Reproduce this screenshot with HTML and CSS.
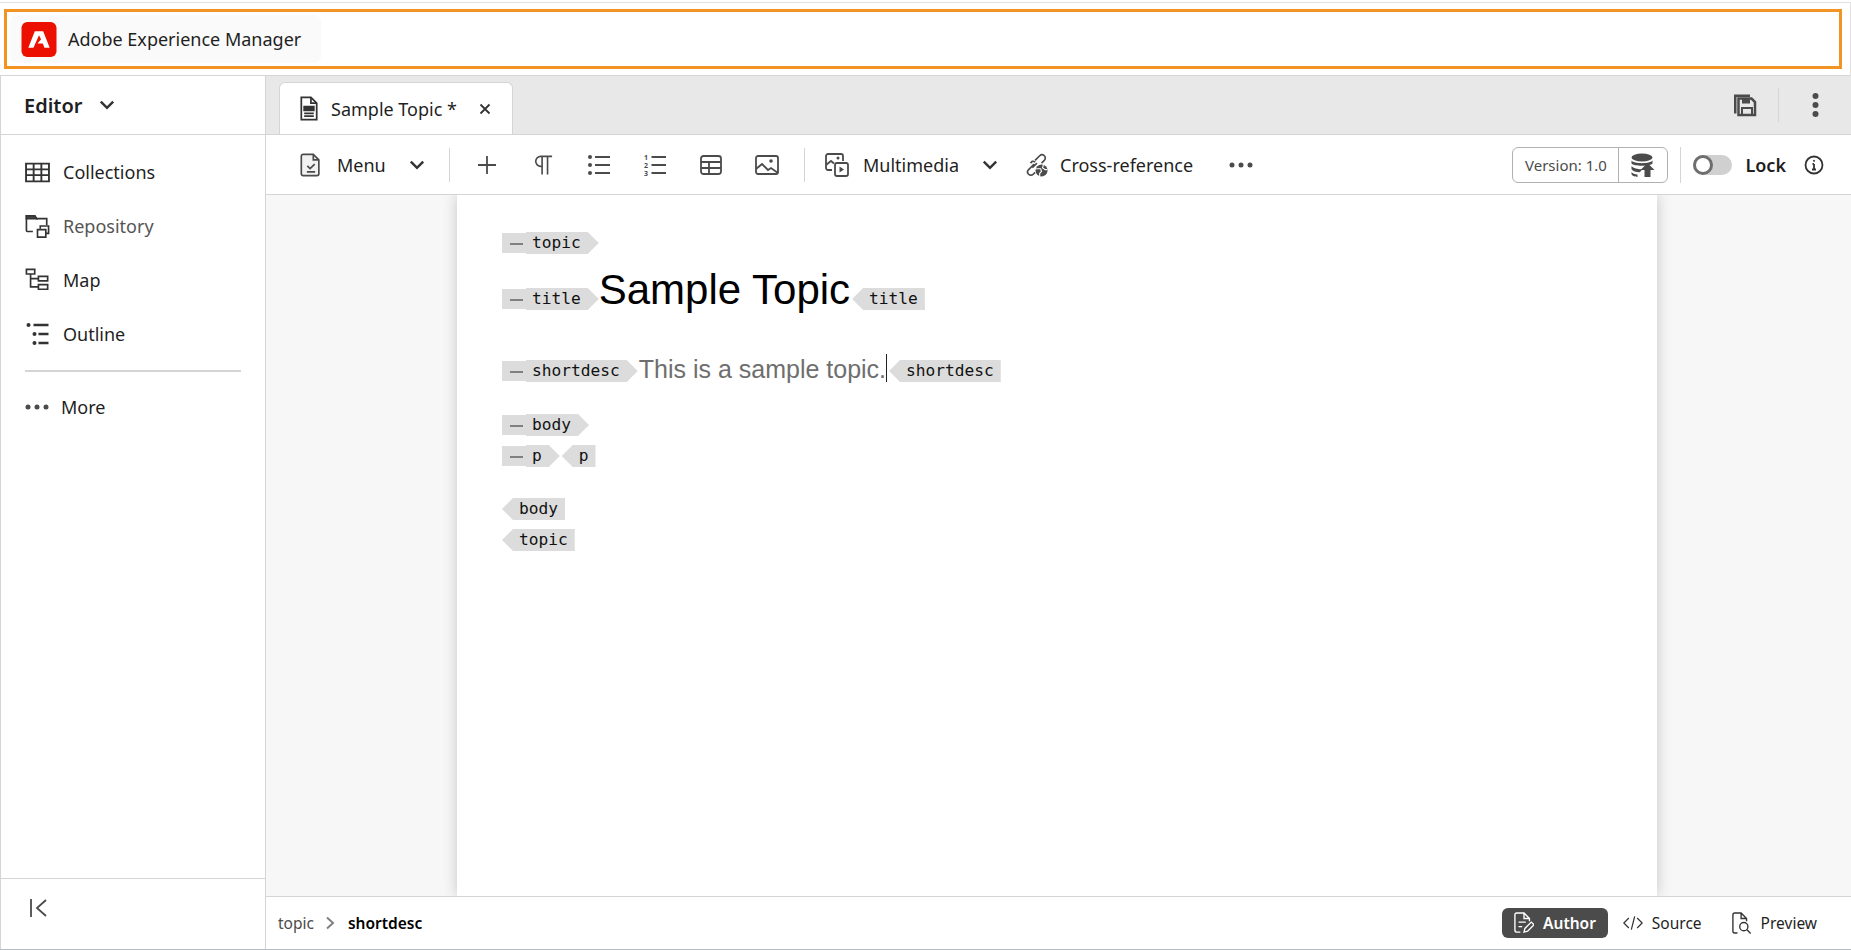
FILE: index.html
```html
<!DOCTYPE html>
<html lang="en">
<head>
    <meta charset="UTF-8">
    <title>Adobe Experience Manager</title>
    <link rel="stylesheet" href="styles.css">
</head>
<body>
<div class="app">
    <header class="topbar">
        <div class="topbar-frame">
            <div class="brand">
                <svg class="brand-logo" viewBox="0 0 36 36"><rect width="36" height="36" rx="6" fill="#eb1000"/><path d="M13.700 9.500h8.600L29 26.500h-5.400l-1.700-4.500h-5.400l3.600-4.300L18 13.500 12.300 26.500H7z" fill="#fff"/></svg>
                <span>Adobe Experience Manager</span>
            </div>
        </div>
    </header>
    <div class="workspace">
        <aside class="sidebar">
            <div class="sidebar-head">
                <span>Editor</span>
                <svg class="ico-chev" viewBox="0 0 16 16"><path d="M2.500 5l5.500 5.500L13.500 5"/></svg>
            </div>
            <nav class="side-nav">
                <a class="side-item">
                    <svg class="ico" viewBox="0 0 24 20"><path d="M1 2h22v17H1zM1 7.500h22M1 13h22M8.300 2v17M15.700 2v17"/></svg>
                    <span>Collections</span>
                </a>
                <a class="side-item muted">
                    <svg class="ico" viewBox="0 0 26 26"><path d="M8 19H2a1 1 0 0 1-1-1V2h9l2 3h11v7"/><path d="M1 2h9l2 3H1z" fill="#4b4b4b"/><path d="M16 16V13h9v8h-3"/><path d="M13 17h9v8h-9z"/></svg>
                    <span>Repository</span>
                </a>
                <a class="side-item">
                    <svg class="ico" viewBox="0 0 26 26"><path d="M1 1.500h9v5H1zM14 9h10v5H14zM14 18h10v5H14zM5.500 6.500V20.500H14M5.500 11.500H14"/></svg>
                    <span>Map</span>
                </a>
                <a class="side-item">
                    <svg class="ico" viewBox="0 0 24 24"><circle cx="3" cy="3" r="2" fill="#333" stroke="none"/><circle cx="9" cy="12" r="2" fill="#333" stroke="none"/><circle cx="9" cy="21" r="2" fill="#333" stroke="none"/><path class="thick" d="M8 3h15M13 12h10M13 21h10"/></svg>
                    <span>Outline</span>
                </a>
            </nav>
            <div class="side-more">
                <svg class="ico-dots" viewBox="0 0 24 6"><circle cx="3" cy="3" r="2.500"/><circle cx="12" cy="3" r="2.500"/><circle cx="21" cy="3" r="2.500"/></svg>
                <span>More</span>
            </div>
            <div class="side-foot">
                <svg class="ico-collapse" viewBox="0 0 20 20"><path d="M2 1v18M17 2L8 10l9 8"/></svg>
            </div>
        </aside>
        <main class="editor">
            <div class="tabstrip">
                <div class="tab">
                    <svg class="ico-doc" viewBox="0 0 20 26"><path d="M2 1.500h10l6 6v17H2z" fill="#fff"/><path d="M12 1.500v6h6" /><path d="M5 11h10v4H5z" fill="#333"/><path d="M5 18h10M5 21h10"/></svg>
                    <span>Sample Topic *</span>
                    <svg class="ico-close" viewBox="0 0 12 12"><path d="M1.500 1.500l9 9M10.500 1.500l-9 9"/></svg>
                </div>
                <div class="tab-actions">
                    <svg class="ico-save" viewBox="0 0 24 24"><path d="M1 1.500h16v2.500H3.500v16.500H1z" fill="#4b4b4b"/><path d="M5.500 5.500h13l3.500 3.500v13H5.500z" fill="none" stroke="#4b4b4b" stroke-width="2.500"/><path d="M9 5.500h8v5H9z" fill="#4b4b4b"/><path d="M9 15h10v7H9z" fill="none" stroke="#4b4b4b" stroke-width="2"/></svg>
                    <i class="vsep tall"></i>
                    <svg class="ico-kebab" viewBox="0 0 6 24"><circle cx="3" cy="3" r="3"/><circle cx="3" cy="12" r="3"/><circle cx="3" cy="21" r="3"/></svg>
                </div>
            </div>
            <div class="toolbar">
                <div class="tool-group first">
                    <svg class="ico" viewBox="0 0 22 26"><path d="M2.500 1.500h11l6 6v15a2 2 0 0 1-2 2h-15a2 2 0 0 1-2-2v-19a2 2 0 0 1 2-2z" fill="#f2f2f2"/><path d="M13.500 1.500v6h6M7 14l3 3 5-5M6.500 20.500h9"/></svg>
                    <span class="tool-label menu-label">Menu</span>
                    <svg class="ico-chev menu-chev" viewBox="0 0 16 16"><path d="M2.500 5l5.500 5.500L13.500 5"/></svg>
                </div>
                <i class="vsep"></i>
                <div class="tool-icons">
                    <button class="icon-btn"><svg class="ico" viewBox="0 0 20 20"><path d="M10 1v18M1 10h18"/></svg></button>
                    <button class="icon-btn"><svg class="ico" viewBox="0 0 20 22"><path d="M9 1.500v20M15 1.500v20M20 1.500H7.500a5.500 5.500 0 0 0 0 11H9"/></svg></button>
                    <button class="icon-btn"><svg class="ico ico-wide" viewBox="0 0 22 20"><circle cx="2" cy="2" r="2" class="dot"/><circle cx="2" cy="10" r="2" class="dot"/><circle cx="2" cy="18" r="2" class="dot"/><path d="M7 2h15M7 10h15M7 18h15"/></svg></button>
                    <button class="icon-btn"><svg class="ico ico-wide" viewBox="0 0 22 20"><path d="M7.500 2h14.500M7.500 10h14.500M7.500 18h14.500"/><text class="ol-num" x="0" y="5">1</text><text class="ol-num" x="0" y="13">2</text><text class="ol-num" x="0" y="21">3</text></svg></button>
                    <button class="icon-btn"><svg class="ico" viewBox="0 0 22 20"><rect x="1" y="1" width="20" height="18" rx="2.500"/><path d="M1 7h20M1 13h20M9 7v12"/></svg></button>
                    <button class="icon-btn"><svg class="ico ico-wide" viewBox="0 0 24 20"><rect x="1" y="1" width="22" height="18" rx="2"/><path d="M1 14l6-5 6 6 3-2 7 5"/><circle cx="16" cy="6" r="1.800" class="dot"/></svg></button>
                </div>
                <i class="vsep"></i>
                <div class="tool-group multimedia">
                    <svg class="ico" viewBox="0 0 24 24"><path d="M7 17H3a2 2 0 0 1-2-2V3a2 2 0 0 1 2-2h13a2 2 0 0 1 2 2v5"/><path d="M1 12l5-4 3 2.500"/><circle cx="13" cy="5" r="1.500" class="dot"/><rect x="10" y="10" width="13" height="13" rx="2"/><path d="M14.500 13.500l4.500 3-4.500 3z" class="dot"/></svg>
                    <span class="tool-label">Multimedia</span>
                    <svg class="ico-chev mm-chev" viewBox="0 0 16 16"><path d="M2.500 5l5.500 5.500L13.500 5"/></svg>
                </div>
                <div class="tool-group xref">
                    <svg class="ico ico-xref" viewBox="0 0 26 26"><path d="M11 12l-6 6a3.500 3.500 0 0 0 5 5l2-2M7 11l2-2a3 3 0 0 1 3 1M12 8l5-5a3.500 3.500 0 0 1 5 5l-3 3M9 16l5-5"/><circle cx="19" cy="19" r="6.500" class="dot"/><path class="globe" d="M13 17h5l1 3-2 2v3M21 13l-1 3 3 2 2 0"/></svg>
                    <span class="tool-label">Cross-reference</span>
                </div>
                <svg class="ico-dots tool-dots" viewBox="0 0 24 6"><circle cx="3" cy="3" r="2.500"/><circle cx="12" cy="3" r="2.500"/><circle cx="21" cy="3" r="2.500"/></svg>
                <div class="tool-right">
                    <div class="version">
                        <span class="version-label">Version: 1.0</span>
                        <span class="version-btn">
                            <svg viewBox="0 0 24 24"><ellipse cx="11" cy="4.500" rx="10.500" ry="4" fill="#4b4b4b"/><path d="M.5 7.500c2 3.500 19 3.500 21 0v3c-2 3-19 3-21 0zM.5 13c2 2.800 8 3.500 11 3.200l-2.700 3c-4 0-7-1-8.300-3zM.5 19c1 1.500 3.500 2.200 6 2.500V24c-3-.2-6-1.500-6-3z" fill="#4b4b4b"/><path d="M16.500 10l7 7h-4v7h-6v-7h-4z" fill="#4b4b4b"/></svg>
                        </span>
                    </div>
                    <i class="vsep tall2"></i>
                    <span class="toggle"></span>
                    <span class="lock">Lock</span>
                    <svg class="ico-info" viewBox="0 0 20 20"><circle cx="10" cy="10" r="8.500"/><path d="M10 9v5.500M8 14.500h4M8.500 9H10"/><circle cx="10" cy="5.800" r="1.100" class="dot"/></svg>
                </div>
            </div>
            <div class="canvas">
                <div class="page">
                    <div class="doc-line line-topic">
                        <span class="tag open"><i class="tag-dash"></i><b>topic</b></span>
                    </div>
                    <div class="doc-line line-title">
                        <span class="tag open"><i class="tag-dash"></i><b>title</b></span>
                        <span class="doc-title">Sample Topic</span>
                        <span class="tag close"><b>title</b></span>
                    </div>
                    <div class="doc-line line-desc">
                        <span class="tag open"><i class="tag-dash"></i><b>shortdesc</b></span>
                        <span class="doc-desc">This is a sample topic.</span><i class="caret"></i>
                        <span class="tag close"><b>shortdesc</b></span>
                    </div>
                    <div class="doc-line line-body">
                        <span class="tag open"><i class="tag-dash"></i><b>body</b></span>
                    </div>
                    <div class="doc-line line-p">
                        <span class="tag open"><i class="tag-dash"></i><b>p</b></span>
                        <span class="tag close"><b>p</b></span>
                    </div>
                    <div class="doc-line line-endbody">
                        <span class="tag close end"><b>body</b></span>
                    </div>
                    <div class="doc-line line-endtopic">
                        <span class="tag close end"><b>topic</b></span>
                    </div>
                </div>
            </div>
            <footer class="statusbar">
                <div class="crumbs">
                    <span class="crumb">topic</span>
                    <svg class="ico-crumb" viewBox="0 0 10 14"><path d="M2 1.500L8 7l-6 5.500"/></svg>
                    <span class="crumb-current">shortdesc</span>
                </div>
                <div class="modes">
                    <span class="mode active">
                        <svg viewBox="0 0 22 24"><path d="M7 22H3a2 2 0 0 1-2-2V3a2 2 0 0 1 2-2h8l6 6v3M11 1v6h6M5 11h8M5 16h4"/><path d="M11 22l1-4 7-7 3 3-7 7z"/></svg>
                        <span>Author</span>
                    </span>
                    <span class="mode">
                        <svg viewBox="0 0 24 20"><path d="M7 4l-6 6 6 6M17 4l6 6-6 6M14 2l-4 16"/></svg>
                        <span>Source</span>
                    </span>
                    <span class="mode mode-preview">
                        <svg viewBox="0 0 22 24"><path d="M6 23H3a2 2 0 0 1-2-2V3a2 2 0 0 1 2-2h7l6 6v3M10 1v6h6"/><circle cx="13" cy="16" r="4.500"/><path d="M16.500 19.500l4 4"/></svg>
                        <span>Preview</span>
                    </span>
                </div>
            </footer>
        </main>
    </div>
</div>
</body>
</html>
```
FILE: styles.css
```css
* {
    box-sizing: border-box;
}

html, body {
    margin: 0;
    height: 100%;
    overflow: hidden;
}

body {
    font-family: 'Noto Sans', sans-serif;
    color: #1f1f1f;
    background: #fff;
}

svg {
    display: block;
    flex: none;
    fill: none;
    stroke: #4b4b4b;
    stroke-width: 1.800;
}

.dot {
    fill: #4b4b4b;
    stroke: none;
}

.thick {
    stroke-width: 2.600;
}

.globe {
    stroke: #fff;
    stroke-width: 1.200;
}

.ol-num {
    font-family: 'Noto Sans', sans-serif;
    font-size: 7px;
    font-weight: 700;
    fill: #4b4b4b;
    stroke: none;
}

.app {
    width: 1851px;
    height: 950px;
    display: flex;
    flex-direction: column;
    border-bottom: 1px solid #b4bfc2;
}

/* top bar */
.topbar {
    height: 74px;
    flex: none;
    margin-top: 2px;
    padding: 6px 8px 0 4px;
    border-top: 1px solid #e1e1e1;
    border-right: 1px solid #e1e1e1;
    border-bottom: 1px solid #d5d5d5;
}

.topbar-frame {
    height: 60px;
    border: 3px solid #f29423;
    padding: 3px;
}

.brand {
    width: 311px;
    height: 48px;
    display: flex;
    align-items: center;
    gap: 11px;
    padding-left: 11px;
    background: #fafafa;
    border-radius: 7px;
    font-size: 18px;
}

.brand-logo {
    width: 36px;
    height: 35px;
    stroke: none;
}

.workspace {
    flex: 1;
    display: flex;
    min-height: 0;
}

/* sidebar */
.sidebar {
    width: 266px;
    flex: none;
    display: flex;
    flex-direction: column;
    border-left: 1px solid #d5d5d5;
    border-right: 1px solid #d5d5d5;
}

.sidebar-head {
    height: 59px;
    flex: none;
    display: flex;
    align-items: center;
    gap: 16px;
    padding-left: 23px;
    border-bottom: 1px solid #d5d5d5;
    font-size: 20px;
    font-weight: 600;
}

.ico-chev {
    width: 18px;
    height: 18px;
    stroke: #333;
    stroke-width: 2.200;
}

.side-nav {
    padding: 10px 24px 0 24px;
}

.side-item {
    height: 54px;
    display: flex;
    align-items: center;
    gap: 13px;
    font-size: 18px;
}

.side-item .ico {
    width: 25px;
    height: 24px;
    stroke: #333;
}

.side-item.muted {
    color: #555;
}

.side-more {
    margin: 9px 24px 0;
    padding-top: 11px;
    height: 60px;
    display: flex;
    align-items: center;
    gap: 12px;
    border-top: 2px solid #d5d5d5;
    font-size: 18px;
}

.ico-dots {
    width: 24px;
    height: 6px;
    stroke: none;
    fill: #4b4b4b;
}

.side-foot {
    margin-top: auto;
    height: 71px;
    padding: 19px 0 0 28px;
    border-top: 1px solid #d5d5d5;
}

.ico-collapse {
    width: 20px;
    height: 20px;
}

/* editor column */
.editor {
    flex: 1;
    min-width: 0;
    display: flex;
    flex-direction: column;
}

.tabstrip {
    height: 59px;
    flex: none;
    display: flex;
    justify-content: space-between;
    background: #e8e8e8;
    border-bottom: 1px solid #d5d5d5;
    padding-left: 13px;
}

.tab {
    width: 234px;
    height: 52px;
    margin-top: 6px;
    display: flex;
    align-items: center;
    padding: 0 21px 0 19px;
    background: #fff;
    border: 1px solid #d5d5d5;
    border-bottom: none;
    border-radius: 6px 6px 0 0;
    font-size: 18px;
}

.ico-doc {
    width: 20px;
    height: 25px;
    margin-right: 12px;
    stroke: #333;
}

.ico-close {
    width: 12px;
    height: 12px;
    margin-left: auto;
    stroke: #333;
    stroke-width: 1.800;
}

.tab-actions {
    display: flex;
    align-items: center;
}

.ico-save {
    width: 24px;
    height: 24px;
    stroke: none;
}

.vsep {
    display: block;
    width: 1px;
    height: 34px;
    background: #d5d5d5;
    flex: none;
}

.vsep.tall {
    margin: 0 33px 0 21px;
}

.ico-kebab {
    width: 7px;
    height: 24px;
    margin-right: 32px;
    stroke: none;
    fill: #4b4b4b;
}

/* toolbar */
.toolbar {
    height: 60px;
    flex: none;
    display: flex;
    align-items: center;
    padding-left: 33px;
    border-bottom: 1px solid #d5d5d5;
}

.tool-group {
    display: flex;
    align-items: center;
    font-size: 18px;
}

.tool-group .ico {
    width: 24px;
    height: 24px;
}

.menu-label {
    margin-left: 14px;
    width: 71px;
}

.menu-chev {
    margin-right: 23px;
}

.tool-icons {
    display: flex;
    margin: 0 9px;
}

.icon-btn {
    width: 56px;
    height: 30px;
    padding: 0;
    border: none;
    background: none;
    display: flex;
    align-items: center;
    justify-content: center;
}

.icon-btn .ico {
    width: 22px;
    height: 20px;
}

.icon-btn .ico-wide {
    width: 24px;
    overflow: visible;
}

.multimedia {
    margin-left: 20px;
}

.multimedia .tool-label {
    margin-left: 14px;
}

.mm-chev {
    margin-left: 22px;
}

.xref {
    margin-left: 25px;
}

.ico-xref {
    margin-right: 12px;
}

.tool-dots {
    margin-left: 36px;
}

.tool-right {
    margin-left: auto;
    display: flex;
    align-items: center;
}

.version {
    width: 156px;
    height: 36px;
    display: flex;
    border: 1px solid #b1b1b1;
    border-radius: 6px;
    font-size: 15px;
    color: #4b4b4b;
}

.version-label {
    flex: 1;
    display: flex;
    align-items: center;
    justify-content: center;
}

.version-btn {
    width: 49px;
    display: flex;
    align-items: center;
    justify-content: center;
    border-left: 1px solid #b1b1b1;
}

.version-btn svg {
    width: 24px;
    height: 24px;
    stroke: none;
}

.vsep.tall2 {
    height: 36px;
    margin: 0 12px;
}

.toggle {
    display: block;
    position: relative;
    width: 39px;
    height: 20px;
    border-radius: 10px;
    background: #d0d0d0;
}

.toggle::before {
    content: "";
    position: absolute;
    left: 0;
    top: 0;
    width: 14px;
    height: 14px;
    border: 3px solid #6e6e6e;
    border-radius: 50%;
    background: #fff;
}

.lock {
    margin-left: 13px;
    font-size: 18px;
    font-weight: 600;
}

.ico-info {
    width: 20px;
    height: 20px;
    margin: 0 27px 0 18px;
    stroke: #333;
}

/* document area */
.canvas {
    flex: 1;
    min-height: 0;
    background: #f7f7f7;
    padding: 0 194px 0 191px;
    overflow: hidden;
}

.page {
    height: 100%;
    background: #fff;
    padding: 37px 0 0 45px;
    box-shadow: 0 0 14px rgba(0, 0, 0, 0.2);
}

.doc-line {
    display: flex;
    align-items: center;
    height: 22px;
}

.line-title {
    margin-top: 34px;
}

.line-desc {
    margin-top: 50px;
}

.line-body {
    margin-top: 32px;
}

.line-p {
    margin-top: 9px;
}

.line-endbody {
    margin-top: 31px;
}

.line-endtopic {
    margin-top: 9px;
}

.tag {
    display: inline-flex;
    align-items: center;
    flex: none;
    height: 20px;
    font-family: 'DejaVu Sans Mono', monospace;
    font-size: 16.200px;
    color: #111;
}

.tag b {
    font-weight: normal;
    line-height: 22px;
    height: 22px;
    background: #dcdcdc;
}

.tag.open {
    padding-left: 8px;
    background: linear-gradient(#dcdcdc, #dcdcdc) left / 24px 100% no-repeat;
}

.tag.open b {
    margin-left: 3px;
    padding: 0 18px 0 6px;
    clip-path: polygon(0 0, calc(100% - 11px) 0, 100% 50%, calc(100% - 11px) 100%, 0 100%);
}

.tag-dash {
    display: block;
    width: 13px;
    height: 2px;
    margin-top: 2px;
    background: #808080;
}

.tag.close {
    margin-left: 2px;
}

.tag.close b {
    padding: 0 7px 0 17px;
    clip-path: polygon(11px 0, 100% 0, 100% 100%, 11px 100%, 0 50%);
}

.tag.close.end {
    margin-left: 0;
}

.doc-title {
    font-family: 'Liberation Sans', sans-serif;
    font-size: 42px;
    color: #000;
    margin: -19px 0 0 0;
    line-height: 46px;
}

.doc-desc {
    font-family: 'Liberation Sans', sans-serif;
    font-size: 25px;
    color: #6e6e6e;
    margin: -5px 0 0 1px;
    line-height: 28px;
}

.caret {
    display: block;
    width: 1px;
    height: 28px;
    background: #222;
    margin-top: -6px;
    flex: none;
}

/* status bar */
.statusbar {
    height: 53px;
    flex: none;
    display: flex;
    align-items: center;
    justify-content: space-between;
    padding: 0 22px 0 12px;
    border-top: 1px solid #d5d5d5;
    font-size: 15.500px;
}

.crumbs {
    display: flex;
    align-items: center;
}

.crumb {
    color: #4b4b4b;
}

.ico-crumb {
    width: 10px;
    height: 14px;
    margin: 0 13px 0 11px;
    stroke: #808080;
    stroke-width: 2;
}

.crumb-current {
    font-weight: 600;
    color: #000;
}

.modes {
    display: flex;
    align-items: center;
}

.mode {
    display: flex;
    align-items: center;
    height: 30px;
    gap: 9px;
    padding: 0 12px;
    border-radius: 6px;
}

.mode + .mode {
    margin-left: 3px;
}

.mode + .mode-preview {
    margin-left: 6px;
}

.mode svg {
    width: 20px;
    height: 22px;
    stroke: #333;
    stroke-width: 1.500;
}

.mode.active {
    background: #4b4b4b;
    color: #fff;
    font-weight: 600;
}

.mode.active svg {
    stroke: #fff;
}
```
